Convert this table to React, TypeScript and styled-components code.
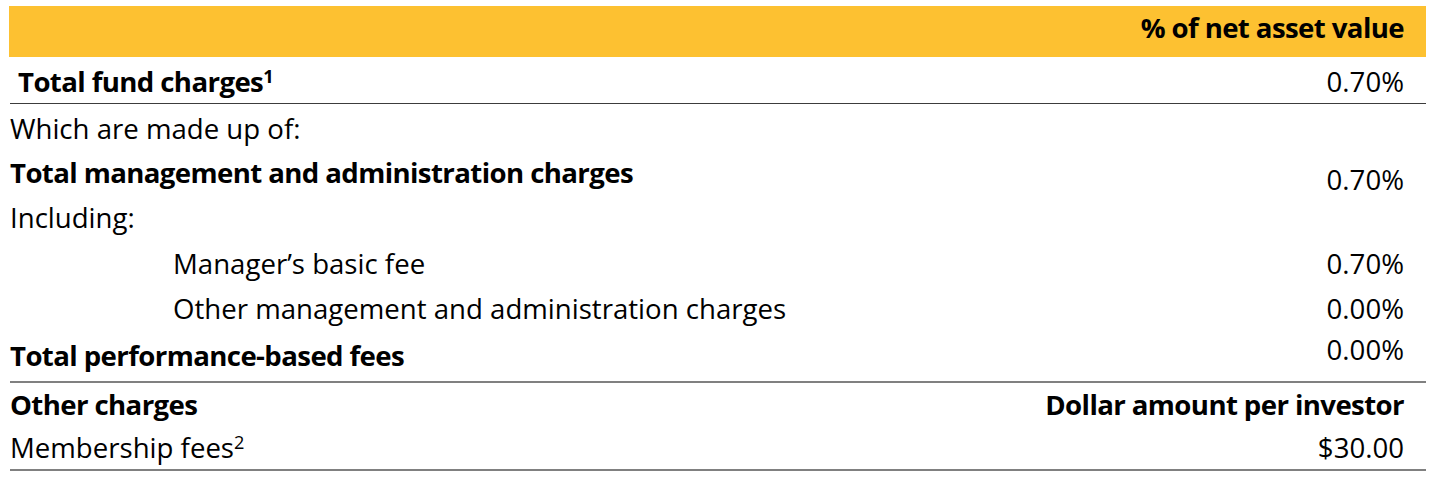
import React from 'react';
import styled, { createGlobalStyle } from 'styled-components';

const GlobalStyle = createGlobalStyle`
  html, body {
    margin: 0;
    padding: 0;
    background: #ffffff;
  }
  body {
    font-family: "Open Sans", Lato, "Liberation Sans", sans-serif;
    color: #000000;
  }
`;

type Fee = {
  label: string;
  value?: string;
  bold?: boolean;
  indent?: boolean;
  height: number;
  valueShift?: number;
};

const feeRows: Fee[] = [
  { label: 'Which are made up of:', height: 45 },
  { label: 'Total management and administration charges', bold: true, value: '0.70%', height: 44, valueShift: 7 },
  { label: 'Including:', height: 46 },
  { label: 'Manager\u2019s basic fee', indent: true, value: '0.70%', height: 45 },
  { label: 'Other management and administration charges', indent: true, value: '0.00%', height: 46 },
  { label: 'Total performance-based fees', bold: true, value: '0.00%', height: 47, valueShift: -6 },
];

export default function App() {
  return (
    <>
      <GlobalStyle />
      <Sheet>
        <HeaderBand>
          <HeaderLabel>% of net asset value</HeaderLabel>
        </HeaderBand>

        <TotalRow>
          <Label bold inset>
            Total fund charges<Sup>1</Sup>
          </Label>
          <Value>0.70%</Value>
        </TotalRow>

        <Section>
          {feeRows.map(row => (
            <Row key={row.label} height={row.height}>
              <Label bold={row.bold} indent={row.indent}>
                {row.label}
              </Label>
              {row.value && <Value shift={row.valueShift}>{row.value}</Value>}
            </Row>
          ))}
        </Section>

        <Section ruled>
          <Row height={44}>
            <Label bold>Other charges</Label>
            <Value bold>Dollar amount per investor</Value>
          </Row>
          <Row height={42}>
            <Label>
              Membership fees<Sup>2</Sup>
            </Label>
            <Value>$30.00</Value>
          </Row>
        </Section>
      </Sheet>
    </>
  );
}

const Sheet = styled.div`
  width: 1416px;
  margin: 6px 0 0 10px;
  font-size: 27.6px;
  line-height: 1;
`;

const HeaderBand = styled.div`
  display: flex;
  justify-content: flex-end;
  align-items: center;
  height: 51px;
  margin-left: -1px;
  padding: 0 22px 7px 0;
  box-sizing: border-box;
  background-color: #fdc131;
`;

const HeaderLabel = styled.span`
  font-weight: 700;
  letter-spacing: -0.6px;
`;

const TotalRow = styled.div`
  display: flex;
  justify-content: space-between;
  align-items: flex-end;
  height: 47px;
  padding: 0 22px 7px 0;
  box-sizing: border-box;
  border-bottom: 1px solid #3c3c3c;
`;

const Section = styled.div<{ ruled?: boolean }>`
  border-top: ${props => (props.ruled ? '2px solid #808080' : 'none')};
  border-bottom: ${props => (props.ruled ? '2px solid #808080' : 'none')};
  padding: ${props => (props.ruled ? '0' : '2px 0')};
`;

const Row = styled.div<{ height: number }>`
  display: flex;
  justify-content: space-between;
  align-items: center;
  height: ${props => props.height}px;
  padding-right: 22px;
`;

const Label = styled.span<{ bold?: boolean; indent?: boolean; inset?: boolean }>`
  font-weight: ${props => (props.bold ? 700 : 400)};
  letter-spacing: ${props => (props.bold ? '-0.6px' : '0')};
  padding-left: ${props => (props.indent ? '163px' : props.inset ? '8px' : '0')};
  white-space: nowrap;
`;

const Value = styled.span<{ bold?: boolean; shift?: number }>`
  font-weight: ${props => (props.bold ? 700 : 400)};
  letter-spacing: ${props => (props.bold ? '-0.6px' : '0')};
  position: relative;
  top: ${props => props.shift ?? 0}px;
  white-space: nowrap;
`;

const Sup = styled.sup`
  font-size: 0.66em;
  vertical-align: 0.5em;
  line-height: 0;
`;
